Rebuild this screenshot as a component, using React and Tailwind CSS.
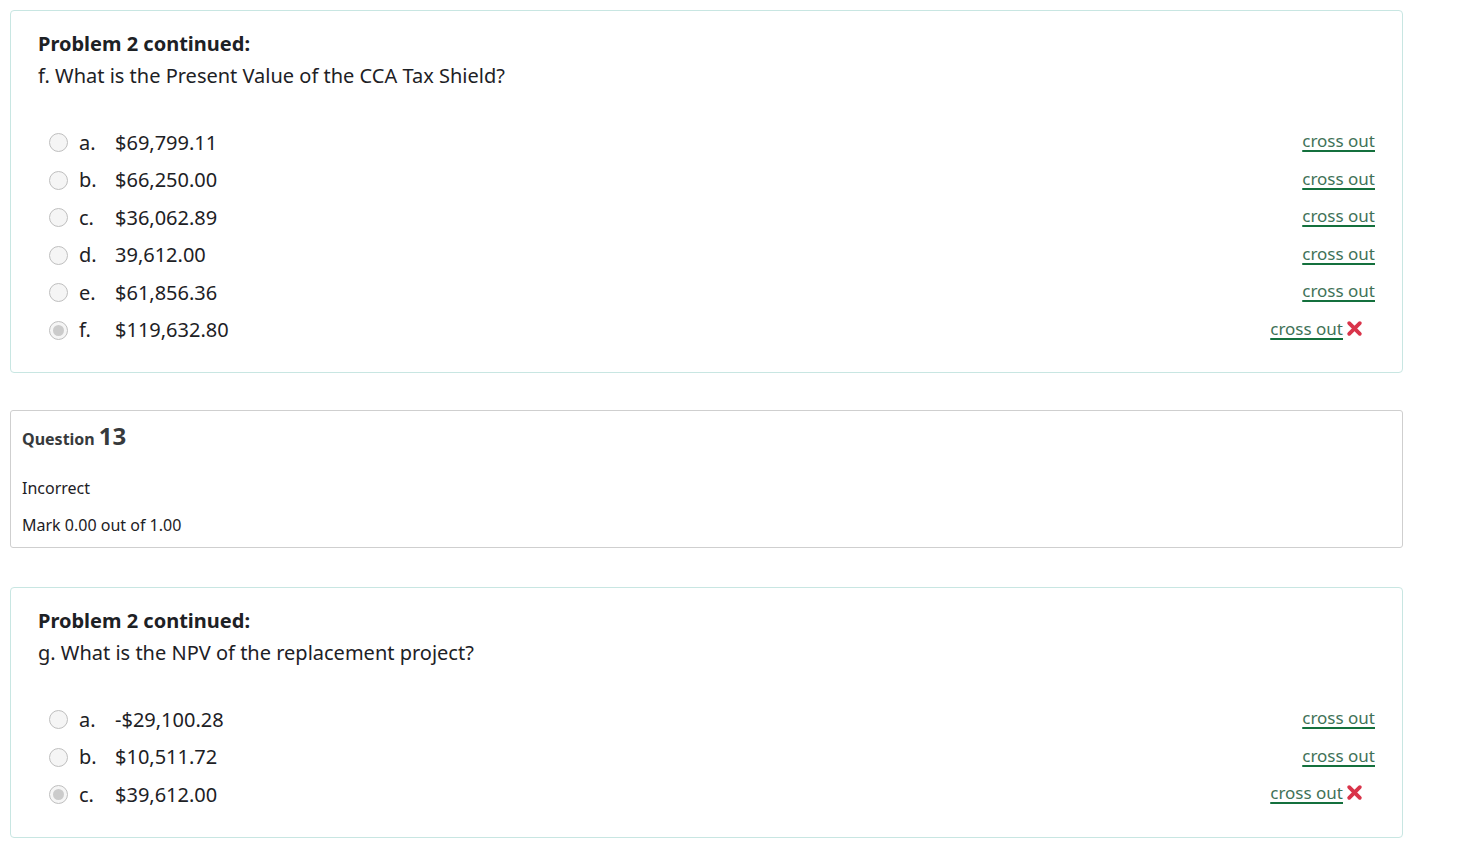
import React from "react";

function Radio({ checked }) {
  return (
    <span className="flex h-[19px] w-[19px] shrink-0 items-center justify-center rounded-full border border-[#bfbfbf] bg-[#f5f5f5]">
      {checked && <span className="h-[11px] w-[11px] rounded-full bg-[#cbcbcb]" />}
    </span>
  );
}

function XIcon() {
  return (
    <svg width="17" height="17" viewBox="0 0 16 16" className="ml-[3px]">
      <path d="M3 3 L13 13 M13 3 L3 13" stroke="#d9344a" strokeWidth="3.6" strokeLinecap="round" />
    </svg>
  );
}

function Option({ letter, value, checked }) {
  return (
    <div className="flex h-[37.5px] items-center">
      <div className="ml-[11px] flex items-center">
        <Radio checked={checked} />
        <span className="ml-[11px] w-[36px]">{letter}</span>
        <span>{value}</span>
      </div>
      <div className="ml-auto flex -translate-y-[2px] items-center">
        <a
          href="#"
          className="text-[17px] text-[#3f7258] underline decoration-[#14703d] decoration-2 underline-offset-[3px]"
        >
          cross out
        </a>
        {checked ? <span className="mr-[12px] flex"><XIcon /></span> : null}
      </div>
    </div>
  );
}

function ProblemCard({ question, options }) {
  return (
    <div className="rounded-[4px] border border-[#c8e6e2] bg-white px-[27px] pt-[17px] pb-[23px] text-[#1d2125]">
      <div className="text-[20px] font-bold leading-[32px]">Problem 2 continued:</div>
      <div className="text-[20px] leading-[32px]">{question}</div>
      <div className="mt-[32px] text-[20px]">
        {options.map((o) => (
          <Option key={o.letter} {...o} />
        ))}
      </div>
    </div>
  );
}

export default function App() {
  return (
    <div
      className="min-h-screen bg-white pl-[10px] pt-[10px]"
      style={{ fontFamily: '"Noto Sans", "Open Sans", Arial, sans-serif' }}
    >
      <div className="w-[1393px]">
        <ProblemCard
          question="f. What is the Present Value of the CCA Tax Shield?"
          options={[
            { letter: "a.", value: "$69,799.11" },
            { letter: "b.", value: "$66,250.00" },
            { letter: "c.", value: "$36,062.89" },
            { letter: "d.", value: "39,612.00" },
            { letter: "e.", value: "$61,856.36" },
            { letter: "f.", value: "$119,632.80", checked: true },
          ]}
        />

        <div className="mt-[37px] rounded-[3px] border border-[#cfcfcf] bg-white px-[11px] pt-[7px] pb-[8px] text-[#1d2125]">
          <div className="flex items-baseline text-[#373a3c]">
            <span className="text-[16px] font-bold">Question</span>
            <span className="ml-[4px] text-[24px] font-bold">13</span>
          </div>
          <div className="mt-[20px] text-[16px] leading-[28px]">Incorrect</div>
          <div className="mt-[9px] text-[16px] leading-[28px]">Mark 0.00 out of 1.00</div>
        </div>

        <div className="mt-[39px]">
          <ProblemCard
            question="g. What is the NPV of the replacement project?"
            options={[
              { letter: "a.", value: "-$29,100.28" },
              { letter: "b.", value: "$10,511.72" },
              { letter: "c.", value: "$39,612.00", checked: true },
            ]}
          />
        </div>
      </div>
    </div>
  );
}
